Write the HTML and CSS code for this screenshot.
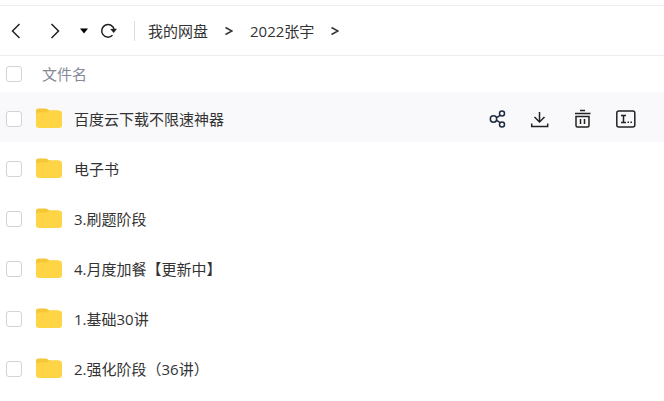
FILE: index.html
```html
<!DOCTYPE html>
<html lang="zh-CN">
<head>
<meta charset="utf-8">
<title>我的网盘</title>
<link rel="stylesheet" href="styles.css">
</head>
<body>
<svg class="defs" width="0" height="0" aria-hidden="true">
  <symbol id="folder" viewBox="0 0 26 20">
    <path d="M0 3a2.500 2.500 0 0 1 2.500-2.500h7c1 0 1.800.3 2.500 1l1.500 1H22v10H0z" fill="#f3c736"/>
    <path d="M0 7c0-1.500 1-2.500 2.500-2.500h7.500c1.500 0 2-2 4-2h9a3 3 0 0 1 3 3v11.500a3 3 0 0 1-3 3H3a3 3 0 0 1-3-3z" fill="#ffd546"/>
  </symbol>
</svg>

<nav class="toolbar">
  <button class="nav-btn" aria-label="后退"><svg width="10" height="16" viewBox="0 0 10 16"><path d="M8.500 1L1.500 8l7 7"/></svg></button>
  <button class="nav-btn forward" aria-label="前进"><svg width="10" height="16" viewBox="0 0 10 16"><path d="M1.500 1l7 7-7 7"/></svg></button>
  <button class="nav-btn history" aria-label="历史记录"><svg width="8" height="6" viewBox="0 0 8 6"><path class="solid" d="M0 .5h8L4 5.500z"/></svg></button>
  <button class="nav-btn refresh" aria-label="刷新"><svg width="18" height="16" viewBox="0 0 18 16"><path d="M12.500 12.300A6.300 6.300 0 1 1 14.200 6.500"/><path class="solid" d="M10.200 6l6.800-.2-3.300 4.200z"/></svg></button>
  <ol class="crumbs">
    <li><a href="#">我的网盘</a></li>
    <li class="sep"><svg width="8" height="10" viewBox="0 0 8 10"><path d="M.5 1.500L7 5 .5 8.500"/></svg></li>
    <li><a href="#">2022张宇</a></li>
    <li class="sep"><svg width="8" height="10" viewBox="0 0 8 10"><path d="M.5 1.500L7 5 .5 8.500"/></svg></li>
  </ol>
</nav>

<table class="files">
  <thead>
    <tr>
      <th class="check"><input type="checkbox" id="all" aria-label="全选"></th>
      <th class="name" colspan="2"><label for="all">文件名</label></th>
    </tr>
  </thead>
  <tbody>
    <tr class="active">
      <td class="check"><input type="checkbox" id="f1"></td>
      <td class="name"><div class="file"><svg class="folder"><use href="#folder"/></svg><label for="f1">百度云下载不限速神器</label></div></td>
      <td class="ops">
        <div class="actions">
          <button aria-label="分享"><svg class="share" width="20" height="20" viewBox="0 0 20 20"><circle cx="6.500" cy="10" r="3.200"/><circle cx="15" cy="4.500" r="2.500"/><circle cx="15" cy="15.500" r="2.500"/><path d="M9.300 8.500c1.800-.5 2.800-1.200 3.800-2.500M9.300 11.500c1.800.5 2.800 1.200 3.800 2.500"/></svg></button>
          <button aria-label="下载"><svg width="20" height="20" viewBox="0 0 20 20"><path d="M9.500 3v10M4.500 8l5 5 5-5M1.700 14.500v3h16v-3"/></svg></button>
          <button aria-label="删除"><svg width="20" height="20" viewBox="0 0 20 20"><path d="M7 1.500h5M2 4.500h15.500M3 7.500h13v9a1.500 1.500 0 0 1-1.500 1.500h-10a1.500 1.500 0 0 1-1.500-1.500zM7.500 10v5M11.500 10v5"/></svg></button>
          <button aria-label="重命名"><svg width="20" height="20" viewBox="0 0 20 20"><rect x=".8" y="2" width="18" height="16" rx="2"/><path d="M5 6.500h5M7.500 6.500v7M5 13.500h5"/><path d="M11.500 13.300h1.500M14.500 13.300h1.500"/></svg></button>
        </div>
      </td>
    </tr>
    <tr>
      <td class="check"><input type="checkbox" id="f2"></td>
      <td class="name" colspan="2"><div class="file"><svg class="folder"><use href="#folder"/></svg><label for="f2">电子书</label></div></td>
    </tr>
    <tr>
      <td class="check"><input type="checkbox" id="f3"></td>
      <td class="name" colspan="2"><div class="file"><svg class="folder"><use href="#folder"/></svg><label for="f3">3.刷题阶段</label></div></td>
    </tr>
    <tr>
      <td class="check"><input type="checkbox" id="f4"></td>
      <td class="name" colspan="2"><div class="file"><svg class="folder"><use href="#folder"/></svg><label for="f4">4.月度加餐【更新中】</label></div></td>
    </tr>
    <tr>
      <td class="check"><input type="checkbox" id="f5"></td>
      <td class="name" colspan="2"><div class="file"><svg class="folder"><use href="#folder"/></svg><label for="f5">1.基础30讲</label></div></td>
    </tr>
    <tr>
      <td class="check"><input type="checkbox" id="f6"></td>
      <td class="name" colspan="2"><div class="file"><svg class="folder"><use href="#folder"/></svg><label for="f6">2.强化阶段（36讲）</label></div></td>
    </tr>
  </tbody>
</table>
</body>
</html>
```

FILE: styles.css
```css
* { box-sizing: border-box; }
body {
  margin: 0;
  padding-top: 5px;
  background: #fff;
  color: #333;
  font: 15px/20px "Open Sans", "Noto Sans CJK SC", sans-serif;
}
a { color: inherit; text-decoration: none; }
button { padding: 0; border: 0; background: none; color: inherit; cursor: pointer; }
svg { display: block; fill: none; stroke: currentColor; stroke-width: 1.5; }
.solid { fill: currentColor; stroke: none; }
.defs { position: absolute; }

/* navigation bar */
.toolbar {
  display: flex;
  align-items: center;
  height: 51px;
  padding-left: 11px;
  border-top: 1px solid #ececee;
  border-bottom: 1px solid #ececee;
}
.nav-btn { color: #222; }
.forward { margin-left: 29px; }
.history { margin-left: 20px; color: #000; }
.refresh { margin-left: 12px; }
.crumbs {
  display: flex;
  align-items: center;
  gap: 17px;
  margin: 0 0 0 16px;
  padding: 0 0 0 13px;
  border-left: 1px solid #dddde0;
  list-style: none;
}

/* file list */
.files { width: 100%; border-collapse: collapse; }
.files th, .files td { padding: 0; text-align: left; vertical-align: middle; }
.files th { height: 36px; color: #858a96; font-weight: normal; }
.files td { height: 50px; padding-top: 4px; }
.files .check { width: 36px; padding-left: 6px; }
.files th.name { padding-left: 6px; }
.active { background: #f9f9fb; }
input {
  display: block;
  appearance: none;
  width: 16px;
  height: 16px;
  margin: 0;
  border: 1px solid #d2d3d7;
  border-radius: 3px;
  background: #fff;
}
input:checked { background: #06a7ff; }
.file { display: flex; align-items: center; gap: 12px; }
.folder { width: 26px; height: 20px; margin-bottom: 2px; stroke: none; }
.ops { width: 177px; }
.actions { display: flex; justify-content: flex-end; gap: 23px; padding-right: 28px; color: #222; }
.share { color: #1d2b40; }
```
